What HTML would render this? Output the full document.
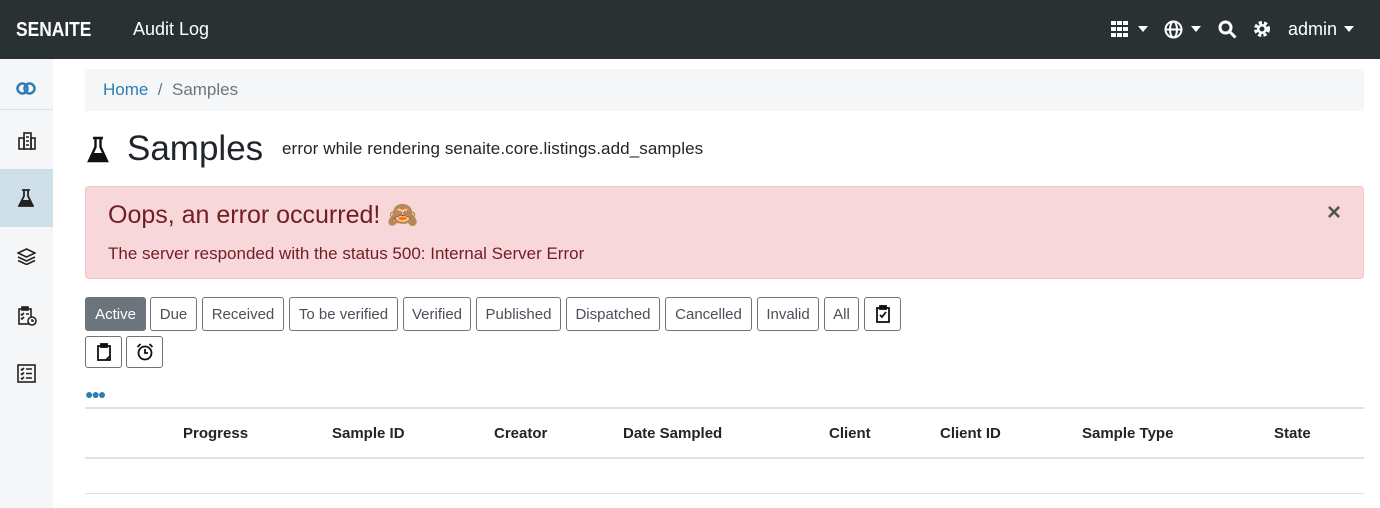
<!DOCTYPE html>
<html><head><meta charset="utf-8"><style>
*{box-sizing:border-box;margin:0;padding:0}
body{width:1380px;height:508px;overflow:hidden;background:#fff;font-family:"Liberation Sans",sans-serif;color:#212529;position:relative}
.nav{position:absolute;left:0;top:0;width:1380px;height:59px;background:#293133;color:#fff}
.abs{position:absolute}
.side{position:absolute;left:0;top:59px;width:53px;height:449px;background:#f5f6f8}
.bc{position:absolute;left:85px;top:69px;width:1279px;height:42px;background:#f5f6f8;font-size:17px;line-height:42px;padding-left:18px;color:#6c757d}
.alert{position:absolute;left:85px;top:186px;width:1279px;height:93px;background:#f8d7da;border:1px solid #f5c2c7;border-radius:4px;color:#721c24}
.b{position:absolute;height:34px;border:1px solid #6c757d;border-radius:3px;font-size:15px;line-height:34px;text-align:center;color:#495057;background:#fff}
.th{position:absolute;top:425px;font-size:15px;font-weight:bold}
</style></head><body>
<div class="nav">
<div class="abs" style="left:16px;top:19px;font-size:20px;font-weight:bold;transform:scaleX(0.87);transform-origin:left">SENAITE</div>
<div class="abs" style="left:133px;top:19px;font-size:18px">Audit Log</div>
<svg class="abs" style="left:1111px;top:21px" width="18" height="16" fill="#fff"><rect x="0" y="0" width="5" height="4"/><rect x="6" y="0" width="5" height="4"/><rect x="12" y="0" width="5" height="4"/><rect x="0" y="6" width="5" height="4"/><rect x="6" y="6" width="5" height="4"/><rect x="12" y="6" width="5" height="4"/><rect x="0" y="12" width="5" height="4"/><rect x="6" y="12" width="5" height="4"/><rect x="12" y="12" width="5" height="4"/></svg>
<svg class="abs" style="left:1138px;top:26px" width="10" height="6" fill="#fff"><path d="M0 0h10L5 6z"/></svg>
<svg class="abs" style="left:1164px;top:20px" width="19" height="19" fill="none" stroke="#fff" stroke-width="2"><circle cx="9.5" cy="9.5" r="8"/><ellipse cx="9.5" cy="9.5" rx="3.5" ry="8"/><path d="M1.5 9.5h16"/></svg>
<svg class="abs" style="left:1191px;top:26px" width="10" height="6" fill="#fff"><path d="M0 0h10L5 6z"/></svg>
<svg class="abs" style="left:1218px;top:20px" width="19" height="19" fill="none" stroke="#fff" stroke-width="3"><circle cx="7.5" cy="7.5" r="5.5"/><path d="M11.5 11.5l6 6"/></svg>
<svg class="abs" style="left:1253px;top:20px" width="18" height="18"><circle cx="9" cy="9" r="6" fill="none" stroke="#fff" stroke-width="4" stroke-dasharray="3 2"/><circle cx="9" cy="9" r="5" fill="#fff"/><circle cx="9" cy="9" r="2.5" fill="#293133"/></svg>
<div class="abs" style="left:1288px;top:19px;font-size:18px">admin</div>
<svg class="abs" style="left:1344px;top:26px" width="10" height="6" fill="#fff"><path d="M0 0h10L5 6z"/></svg>
</div>
<div class="side">
<svg class="abs" style="left:16px;top:23px" width="20" height="13" fill="none" stroke="#2e7db3" stroke-width="2.5"><circle cx="6.5" cy="6.5" r="5"/><circle cx="13.5" cy="6.5" r="5"/></svg>
<div class="abs" style="left:0;top:50px;width:53px;height:1px;background:#dde1e4"></div>
<svg class="abs" style="left:18px;top:73px" width="18" height="18" fill="none" stroke="#222" stroke-width="1.6"><rect x="1" y="6" width="5" height="11"/><rect x="6" y="1" width="7" height="16"/><rect x="13" y="6" width="4" height="11"/><path d="M8 5h3M8 9h3M8 13h3"/></svg>
<div class="abs" style="left:0;top:110px;width:53px;height:58px;background:#cfdfe9"></div>
<svg class="abs" style="left:18px;top:130px" width="16" height="19"><path d="M4 1h8M6 1v6L1 17h14L10 7V1" fill="none" stroke="#222" stroke-width="1.8"/><path d="M3.5 11h9L15 17H1z" fill="#222"/></svg>
<svg class="abs" style="left:17px;top:189px" width="19" height="17" fill="none" stroke="#222" stroke-width="1.6"><path d="M9.5 1L18 5 9.5 9 1 5z"/><path d="M1 9l8.5 4 8.5-4M1 12.5l8.5 4 8.5-4"/></svg>
<svg class="abs" style="left:17px;top:247px" width="20" height="20" fill="none" stroke="#222" stroke-width="1.6"><rect x="2" y="3" width="12" height="15"/><rect x="5" y="1" width="6" height="3" fill="#222"/><path d="M4 8l1 1 2-2M9 8h3M4 12l1 1 2-2"/><circle cx="15" cy="15" r="4" fill="#fff"/><path d="M15 13v2h2"/></svg>
<svg class="abs" style="left:17px;top:305px" width="19" height="19" fill="none" stroke="#222" stroke-width="1.6"><rect x="1" y="1" width="17" height="17"/><path d="M4 5l1 1 2-2M9 5h6M4 9.5l1 1 2-2M9 9.5h6M4 14l1 1 2-2M9 14h6"/></svg>
</div>
<div class="bc"><span style="color:#2e7db3">Home</span>&nbsp; / &nbsp;Samples</div>
<svg class="abs" style="left:87px;top:136px" width="22" height="27"><path d="M6 2h10M8.5 2v9L2 25h18L13.5 11V2" fill="none" stroke="#111" stroke-width="2.4"/><path d="M5 17h12L20 25H2z" fill="#111"/></svg>
<div class="abs" style="left:127px;top:129px;font-size:35px">Samples</div>
<div class="abs" style="left:282px;top:139px;font-size:17px;letter-spacing:0.1px">error while rendering senaite.core.listings.add_samples</div>
<div class="alert">
<div class="abs" style="left:22px;top:14px;font-size:25px">Oops, an error occurred! 🙈</div>
<div class="abs" style="left:22px;top:57px;font-size:17px">The server responded with the status 500: Internal Server Error</div>
<div class="abs" style="left:1241px;top:12px;font-size:24px;color:#555;font-weight:bold">×</div>
</div>
<div class="b" style="left:85px;top:297px;width:61px;background:#6c757d;color:#fff">Active</div>
<div class="b" style="left:150px;top:297px;width:47px">Due</div>
<div class="b" style="left:202px;top:297px;width:82px">Received</div>
<div class="b" style="left:289px;top:297px;width:109px">To be verified</div>
<div class="b" style="left:403px;top:297px;width:68px">Verified</div>
<div class="b" style="left:476px;top:297px;width:85px">Published</div>
<div class="b" style="left:566px;top:297px;width:94px">Dispatched</div>
<div class="b" style="left:665px;top:297px;width:87px">Cancelled</div>
<div class="b" style="left:757px;top:297px;width:62px">Invalid</div>
<div class="b" style="left:824px;top:297px;width:35px">All</div>
<div class="b" style="left:864px;top:297px;width:37px;line-height:0"><svg width="14" height="18" style="margin-top:7px" fill="none" stroke="#111" stroke-width="1.8"><rect x="1" y="3" width="12" height="14"/><rect x="4" y="1" width="6" height="3" fill="#111"/><path d="M4 10l2 2 4-5"/></svg></div>
<div class="b" style="left:85px;top:336px;width:37px;height:32px;line-height:0"><svg width="14" height="18" style="margin-top:6px" fill="none" stroke="#111" stroke-width="1.8"><rect x="1" y="3" width="12" height="14"/><rect x="4" y="1" width="6" height="3" fill="#111"/><path d="M9 17l4-4"/></svg></div>
<div class="b" style="left:126px;top:336px;width:37px;height:32px;line-height:0"><svg width="18" height="18" style="margin-top:6px" fill="none" stroke="#111" stroke-width="1.8"><circle cx="9" cy="10" r="6.5"/><path d="M9 6v4h3M1.5 4l3-3M16.5 4l-3-3"/></svg></div>
<div class="abs" style="left:85px;top:386px;font-size:14px;color:#2e7db3;letter-spacing:-2px;font-weight:bold">●●●</div>
<div class="abs" style="left:85px;top:407px;width:1279px;height:2px;background:#dee2e6"></div>
<div class="th" style="left:183px">Progress</div>
<div class="th" style="left:332px">Sample ID</div>
<div class="th" style="left:494px">Creator</div>
<div class="th" style="left:623px">Date Sampled</div>
<div class="th" style="left:829px">Client</div>
<div class="th" style="left:940px">Client ID</div>
<div class="th" style="left:1082px">Sample Type</div>
<div class="th" style="left:1274px">State</div>
<div class="abs" style="left:85px;top:457px;width:1279px;height:2px;background:#dee2e6"></div>
<div class="abs" style="left:85px;top:493px;width:1279px;height:1px;background:#dee2e6"></div>
</body></html>
